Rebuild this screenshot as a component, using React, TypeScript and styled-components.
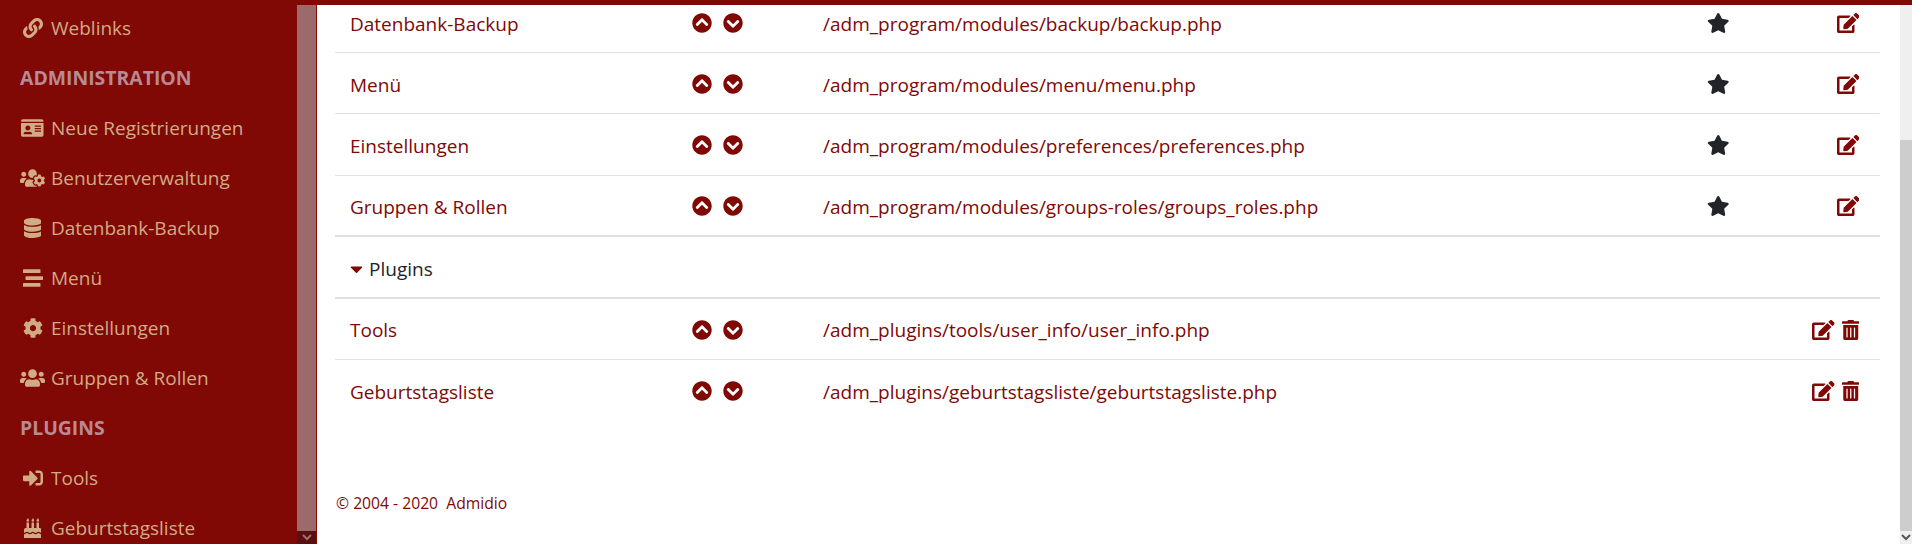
import React from 'react';
import styled, { createGlobalStyle } from 'styled-components';
import { FaLink, FaIdCard, FaUsersCog, FaDatabase, FaStream, FaCog, FaUsers, FaSignInAlt, FaBirthdayCake, FaChevronCircleUp, FaChevronCircleDown, FaStar, FaEdit, FaTrashAlt, FaCaretDown } from 'react-icons/fa';

const Global = createGlobalStyle`
  html, body { margin: 0; padding: 0; height: 544px; overflow: hidden; background: #fff; }
  body { font-family: "Open Sans", "Noto Sans", sans-serif; font-size: 16px; color: #212529; }
  #root { height: 544px; }
`;
const Page = styled.div`display: flex; height: 544px; width: 1912px; overflow: hidden; border-top: 5px solid #800805; box-sizing: border-box;`;
const Side = styled.nav`width: 297px; margin-top: -5px; flex: none; background: #800805; padding-top: 2px; box-sizing: border-box; overflow: hidden;`;
const SideScroll = styled.div`width: 20px; flex: none; background: #9c6a6a; border-right: 1px solid #800805; box-sizing: border-box; position: relative;`;
const ScrollDown = styled.div`position: absolute; left: 0; right: 0; bottom: 0; height: 13px; background: #5a1010; color: #a07070; display: flex; align-items: center; justify-content: center;`;
const SideHead = styled.div`height: 50px; padding: 2px 0 0 20px; box-sizing: border-box; display: flex; align-items: center; font-weight: 700; color: #b98a93; font-size: 19.4px; line-height: 1;`;
const SideItem = styled.div`height: 50px; padding: 2px 0 0 20px; box-sizing: border-box; display: flex; align-items: center; color: #d1ab84; font-size: 19px; white-space: nowrap;`;
const SideIcon = styled.span<{ $w: number }>`width: 25px; margin-right: 6px; flex: none; display: flex; justify-content: center; svg { height: 20px; width: ${p => p.$w}px; flex: none; }`;
const Main = styled.main`flex: 1; min-width: 0; padding: 0 20px 0 18px; display: flex; flex-direction: column; overflow: hidden;`;
const Rows = styled.div`display: flex; flex-direction: column; margin-top: -13px;`;
const Row = styled.div<{ $thick?: boolean; $last?: boolean }>`height: 61.2px; box-sizing: border-box; display: grid; grid-template-columns: 342px 131px 884px 86px 72px; align-items: center; padding: 2px 15px 0; border-bottom: ${p => p.$thick ? 2 : 1}px solid ${p => p.$last ? 'transparent' : '#dee2e6'}; color: #800805; font-size: 19px; white-space: nowrap;`;
const Cell = styled.span`padding-top: 1px;`;
const Group = styled.div`height: 62px; box-sizing: border-box; display: flex; align-items: center; padding: 4px 15px 0; gap: 6px; border-bottom: 2px solid #dee2e6; font-size: 19px; color: #212529;`;
const Arrows = styled.div`display: flex; gap: 11px; svg { height: 20px; width: 20px; }`;
const Star = styled.div`color: #212529; display: flex; svg { height: 20px; width: 22.5px; }`;
const Actions = styled.div`display: flex; justify-content: flex-end; gap: 7px; margin-right: 6px;`;
const EditIcon = styled(FaEdit)`height: 20px; width: 22.5px;`;
const TrashIcon = styled(FaTrashAlt)`height: 20px; width: 17.5px;`;
const Footer = styled.footer`margin-top: 71px; padding-left: 1px; color: #800805; font-size: 15.7px; white-space: pre;`;
const PageScroll = styled.div`width: 12px; flex: none; margin-top: -5px; background: linear-gradient(#efefef 0 140px, #cdcdcd 140px 531px, #efefef 531px); position: relative; color: #555;`;
const PageScrollArrow = styled.svg`position: absolute; left: 1px; bottom: 3px;`;
const Caret = styled.span`color: #800805; display: flex; svg { height: 20px; width: 13px; }`;

const side: [React.ReactNode, string, number][] = [
  [<FaIdCard />, 'Neue Registrierungen', 22.5], [<FaUsersCog />, 'Benutzerverwaltung', 25], [<FaDatabase />, 'Datenbank-Backup', 17.5],
  [<FaStream />, 'Menü', 20], [<FaCog />, 'Einstellungen', 20], [<FaUsers />, 'Gruppen & Rollen', 25],
];
const sys = [
  ['Datenbank-Backup', '/adm_program/modules/backup/backup.php'],
  ['Menü', '/adm_program/modules/menu/menu.php'],
  ['Einstellungen', '/adm_program/modules/preferences/preferences.php'],
  ['Gruppen & Rollen', '/adm_program/modules/groups-roles/groups_roles.php'],
];
const plug = [
  ['Tools', '/adm_plugins/tools/user_info/user_info.php'],
  ['Geburtstagsliste', '/adm_plugins/geburtstagsliste/geburtstagsliste.php'],
];

export default function App() {
  return (
    <Page>
      <Global />
      <Side>
        <SideItem><SideIcon $w={20}><FaLink /></SideIcon>Weblinks</SideItem>
        <SideHead>ADMINISTRATION</SideHead>
        {side.map(([i, t, w]) => <SideItem key={t}><SideIcon $w={w}>{i}</SideIcon>{t}</SideItem>)}
        <SideHead>PLUGINS</SideHead>
        <SideItem><SideIcon $w={20}><FaSignInAlt /></SideIcon>Tools</SideItem>
        <SideItem><SideIcon $w={17.5}><FaBirthdayCake /></SideIcon>Geburtstagsliste</SideItem>
      </Side>
      <SideScroll><ScrollDown><svg width="10" height="7" viewBox="0 0 10 7"><path d="M1 1l4 4 4-4" fill="none" stroke="currentColor" strokeWidth="2" /></svg></ScrollDown></SideScroll>
      <Main>
        <Rows>
          {sys.map(([n, p], i) => (
            <Row key={n} $thick={i === 3}>
              <Cell>{n}</Cell>
              <Arrows><FaChevronCircleUp /><FaChevronCircleDown /></Arrows>
              <Cell>{p}</Cell>
              <Star><FaStar /></Star>
              <Actions><EditIcon /></Actions>
            </Row>
          ))}
          <Group><Caret><FaCaretDown /></Caret>Plugins</Group>
          {plug.map(([n, p], i) => (
            <Row key={n} $last={i === 1}>
              <Cell>{n}</Cell>
              <Arrows><FaChevronCircleUp /><FaChevronCircleDown /></Arrows>
              <Cell>{p}</Cell>
              <span />
              <Actions><EditIcon /><TrashIcon /></Actions>
            </Row>
          ))}
        </Rows>
        <Footer>© 2004 - 2020  Admidio</Footer>
      </Main>
      <PageScroll><PageScrollArrow width="10" height="7" viewBox="0 0 10 7"><path d="M1 1l4 4 4-4" fill="none" stroke="currentColor" strokeWidth="2" /></PageScrollArrow></PageScroll>
    </Page>
  );
}
